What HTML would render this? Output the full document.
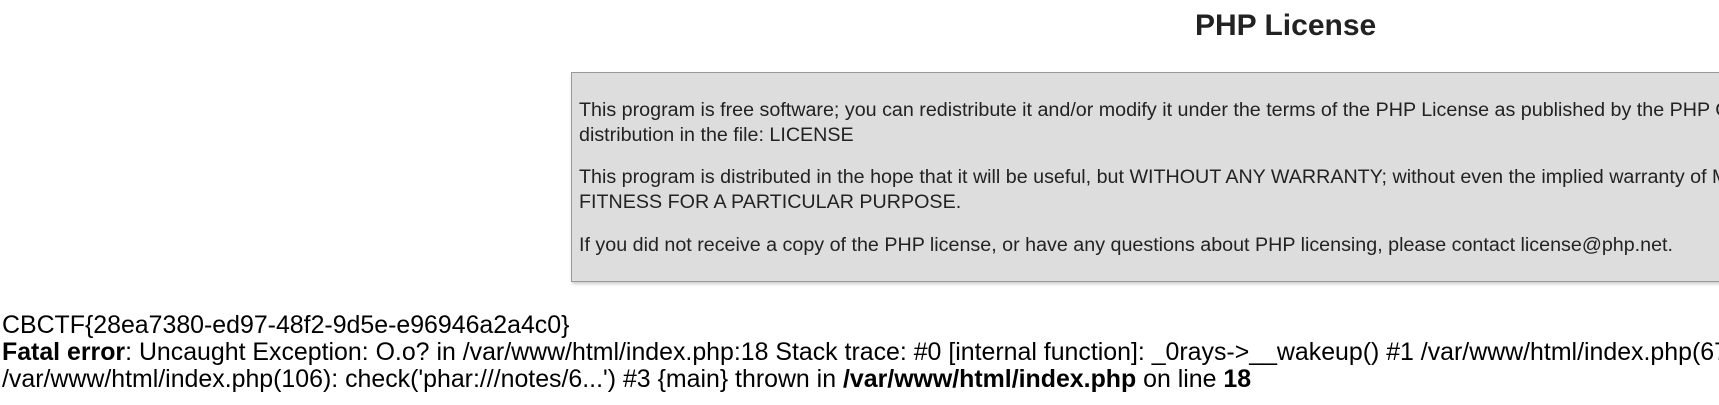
<!DOCTYPE html>
<html><head><style>
html,body{margin:0;padding:0;width:1719px;height:405px;overflow:hidden;background:#fff;font-family:"Liberation Sans",sans-serif;color:#222;}
.wrap{position:absolute;left:0;top:0;width:1719px;height:405px;overflow:hidden;}
.t{position:absolute;left:1195px;top:8px;font-size:30px;line-height:36px;font-weight:bold;white-space:nowrap;}
.box{position:absolute;left:571px;top:72px;width:1300px;height:208px;background:#ddd;border:1px solid #999;box-shadow:1px 2px 3px #ccc;}
.box p{position:absolute;left:7px;margin:0;font-size:19.7px;line-height:25px;white-space:nowrap;color:#222;}
.b{position:absolute;left:2px;font-size:24.9px;line-height:27px;white-space:nowrap;color:#000;}
</style></head><body><div class="wrap">
<div class="t">PHP License</div>
<div class="box">
<p style="top:25px">This program is free software; you can redistribute it and/or modify it under the terms of the PHP License as published by the PHP Group and included in the<br>distribution in the file: LICENSE</p>
<p style="top:92px">This program is distributed in the hope that it will be useful, but WITHOUT ANY WARRANTY; without even the implied warranty of MERCHANTABILITY or<br>FITNESS FOR A PARTICULAR PURPOSE.</p>
<p style="top:160px">If you did not receive a copy of the PHP license, or have any questions about PHP licensing, please contact license@php.net.</p>
</div>
<div class="b" style="top:312px">CBCTF{28ea7380-ed97-48f2-9d5e-e96946a2a4c0}</div>
<div class="b" style="top:339px"><b>Fatal error</b>: Uncaught Exception: O.o? in /var/www/html/index.php:18 Stack trace: #0 [internal function]: _0rays-&gt;__wakeup() #1 /var/www/html/index.php(67): ...</div>
<div class="b" style="top:366px">/var/www/html/index.php(106): check('phar:///notes/6...') #3 {main} thrown in <b>/var/www/html/index.php</b> on line <b>18</b></div>
</div></body></html>
